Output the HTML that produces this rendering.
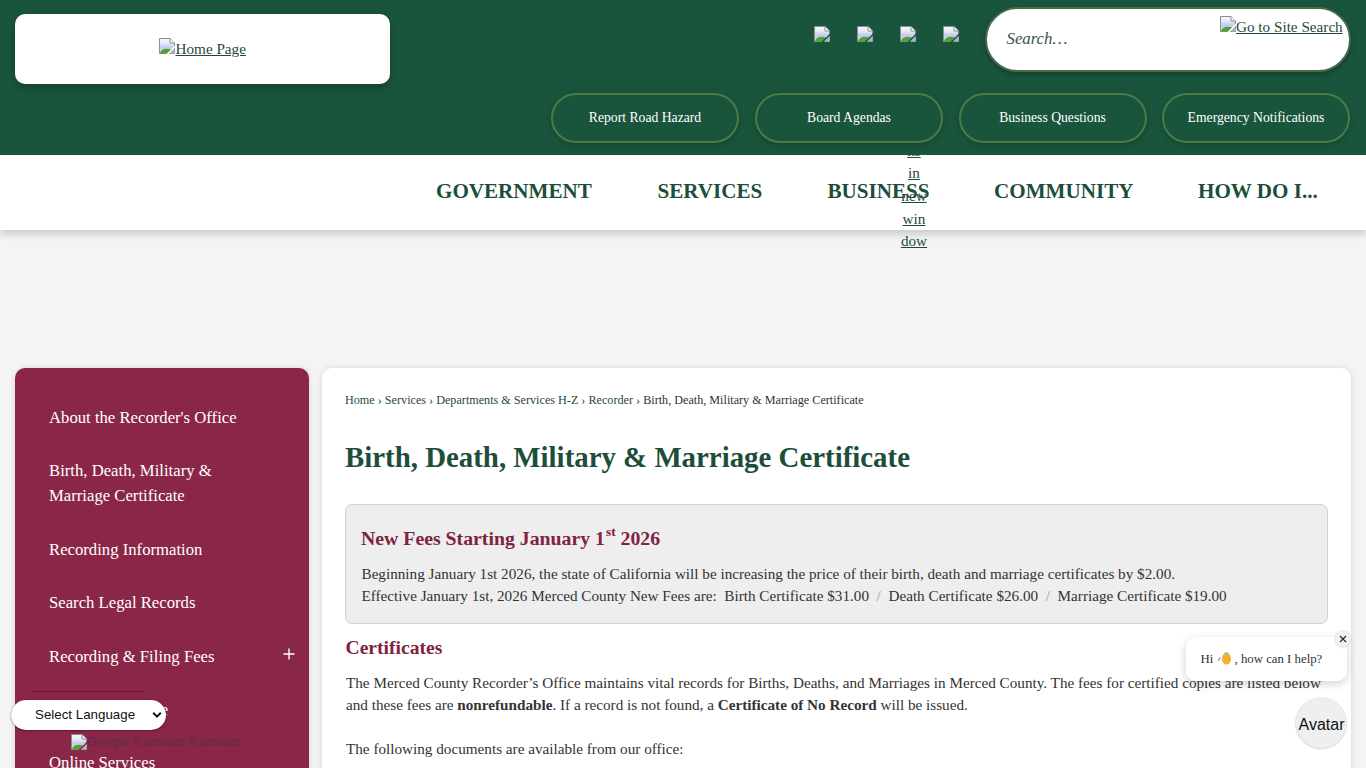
<!DOCTYPE html>
<html><head><meta charset="utf-8">
<style>
*{box-sizing:border-box;margin:0;padding:0}
html,body{width:1366px;height:768px;overflow:hidden}
body{background:#f4f4f4;font-family:"Liberation Serif",serif;position:relative;color:#333;font-size:15.2px;line-height:1.5}
.abs{position:absolute}
.t{position:absolute;white-space:nowrap}
#hdr{left:0;top:0;width:1366px;height:155px;background:#19553c;z-index:5}
#logo{left:15px;top:14px;width:375px;height:70px;background:#fff;border-radius:10px;box-shadow:0 3px 8px rgba(0,0,0,.28)}
.bi{position:absolute;width:16px;height:16px}
.lnk{color:#1f4a3b;text-decoration:underline;font-size:15.2px;line-height:20px;white-space:nowrap}
#search{left:985px;top:7px;width:366px;height:65px;background:#fff;border:2px solid #486c43;border-radius:33px;box-shadow:0 2px 6px rgba(0,0,0,.3)}
.btn{position:absolute;top:93px;width:188px;height:50px;border:2px solid #4a7c48;border-radius:25px;color:#fff;font-size:13.68px;text-align:center;line-height:46px;box-shadow:0 2px 6px rgba(0,0,0,.22)}
#nav{left:0;top:155px;width:1366px;height:75px;background:#fff;box-shadow:0 4px 8px rgba(0,0,0,.18);z-index:3}
.ni{position:absolute;top:-1px;height:75px;line-height:75px;font-weight:bold;font-size:21.1px;color:#1c4e3a;white-space:nowrap}
#owin{left:884px;top:116.5px;width:60px;font-size:15.2px;line-height:22.8px;text-align:center;z-index:4;color:#1f4a3b}
#owin span{text-decoration:underline}
#side{left:15px;top:368px;width:294px;height:420px;background:#8a2648;border-radius:10px;box-shadow:0 0 6px rgba(0,0,0,.12)}
.si{position:absolute;left:49px;color:#fff;font-size:16.7px;line-height:25px;white-space:nowrap;z-index:2}
#card{left:322px;top:368px;width:1029px;height:420px;background:#fff;border-radius:10px;box-shadow:0 0 6px rgba(0,0,0,.12)}
.bc{color:#1f4a3b}
#notice{left:345px;top:504px;width:983px;height:120px;background:#eeeeee;border:1px solid #d2d2d2;border-radius:7px}
h1{position:absolute;font-size:28.87px;line-height:34px;font-weight:bold;color:#1c4e3a;white-space:nowrap}
.h3{position:absolute;font-size:19.8px;line-height:24px;font-weight:bold;color:#80233f;white-space:nowrap}
.sep{color:#999}
#sel{left:11px;top:700px;width:155px;height:30px;background:#fff;border-radius:15px;box-shadow:0 0 1px rgba(0,0,0,.5),0 1px 2px rgba(0,0,0,.3);z-index:6;font-family:"Liberation Sans",sans-serif;font-size:13.33px;color:#111}
#bubble{left:1186px;top:637px;width:161px;height:44px;background:#fff;border-radius:10px;box-shadow:0 3px 10px rgba(0,0,0,.18);z-index:6}
#avatar{left:1296px;top:698px;width:50px;height:50px;border-radius:25px;background:#efefef;box-shadow:0 0 0 1px rgba(0,0,0,.06),0 1px 3px rgba(0,0,0,.12);z-index:6;font-family:"Liberation Sans",sans-serif;font-size:16px;color:#111}
</style></head><body>

<!-- HEADER -->
<div id="hdr" class="abs">
  <div id="logo" class="abs">
    <svg class="bi" style="left:144px;top:24px" viewBox="0 0 16 16"><use href="#bimg"/></svg>
    <div class="t lnk" style="left:160.5px;top:25px">Home Page</div>
  </div>
  <svg class="bi" style="left:814px;top:26px" viewBox="0 0 16 16"><use href="#bimg"/></svg>
  <svg class="bi" style="left:857px;top:26px" viewBox="0 0 16 16"><use href="#bimg"/></svg>
  <svg class="bi" style="left:900px;top:26px" viewBox="0 0 16 16"><use href="#bimg"/></svg>
  <svg class="bi" style="left:943px;top:26px" viewBox="0 0 16 16"><use href="#bimg"/></svg>
  <div id="search" class="abs">
    <div class="t" style="left:19.5px;top:19.8px;font-style:italic;font-size:16.75px;line-height:20px;color:#355449">Search…</div>
    <svg class="bi" style="left:233px;top:7px" viewBox="0 0 16 16"><use href="#bimg"/></svg>
    <div class="t lnk" style="left:249px;top:8px">Go to Site Search</div>
  </div>
  <div class="btn" style="left:551px">Report Road Hazard</div>
  <div class="btn" style="left:755px">Board Agendas</div>
  <div class="btn" style="left:958.5px">Business Questions</div>
  <div class="btn" style="left:1162px">Emergency Notifications</div>
</div>

<!-- NAV -->
<div id="nav" class="abs">
  <div class="ni" style="left:436px">GOVERNMENT</div>
  <div class="ni" style="left:657.5px">SERVICES</div>
  <div class="ni" style="left:827.5px">BUSINESS</div>
  <div class="ni" style="left:994px">COMMUNITY</div>
  <div class="ni" style="left:1198px">HOW DO I...</div>
</div>
<div id="owin" class="abs"><span>Ope</span><br><span style="position:relative;top:1px">ns</span><br><span>in</span><br><span>new</span><br><span>win</span><br><span>dow</span></div>

<!-- SIDEBAR -->
<div id="side" class="abs"></div>
<div class="si" style="top:405px">About the Recorder's Office</div>
<div class="si" style="top:457.5px">Birth, Death, Military &amp;<br>Marriage Certificate</div>
<div class="si" style="top:536.5px">Recording Information</div>
<div class="si" style="top:589.5px">Search Legal Records</div>
<div class="si" style="top:644px">Recording &amp; Filing Fees</div>
<svg class="abs" style="left:283px;top:648px;z-index:2" width="12" height="12" viewBox="0 0 12 12"><path d="M6 0.5V11.5M0.5 6H11.5" stroke="#fff" stroke-width="1.4"/></svg>
<div class="abs" style="left:32px;top:691px;width:112px;height:1px;background:rgba(60,10,30,.45);z-index:2"></div>
<div class="si" style="top:697.4px;left:51px">Marriage License</div>
<div class="si" style="top:750px">Online Services</div>
<svg class="bi" style="left:71px;top:734px;z-index:2" viewBox="0 0 16 16"><use href="#bimg"/></svg>
<div class="t" style="left:87px;top:734px;z-index:2;font-family:'Liberation Sans',sans-serif;font-weight:bold;font-size:12px;line-height:16px;color:#682b46">Google Translate Translate</div>
<div id="sel" class="abs">
  <div class="t" style="left:24px;top:7px;line-height:16px">Select Language</div>
  <svg class="abs" style="left:141px;top:11px" width="10" height="8" viewBox="0 0 10 8"><path d="M1.2 1.8L5 5.6L8.8 1.8" stroke="#111" stroke-width="2" fill="none"/></svg>
</div>

<!-- CARD -->
<div id="card" class="abs"></div>
<div class="t" style="left:345px;top:391px;font-size:12.16px;line-height:18px;z-index:2"><span class="bc">Home</span> › <span class="bc">Services</span> › <span class="bc">Departments &amp; Services H-Z</span> › <span class="bc">Recorder</span> › Birth, Death, Military &amp; Marriage Certificate</div>
<h1 style="left:345px;top:440px;z-index:2">Birth, Death, Military &amp; Marriage Certificate</h1>
<div id="notice" class="abs"></div>
<div class="h3" style="left:361px;top:525.5px;z-index:2">New Fees Starting January 1<sup style="font-size:13.4px;line-height:0;vertical-align:9px;margin-left:1px">st</sup> 2026</div>
<div class="t" style="left:361.5px;top:562.5px;z-index:2">Beginning January 1st 2026, the state of California will be increasing the price of their birth, death and marriage certificates by $2.00.<br>Effective January 1st, 2026 Merced County New Fees are:&nbsp; Birth Certificate $31.00&nbsp; <span class="sep">/</span> &nbsp;Death Certificate $26.00&nbsp; <span class="sep">/</span> &nbsp;Marriage Certificate $19.00</div>
<div class="h3" style="left:345.5px;top:636px;z-index:2;font-size:19.6px">Certificates</div>
<div class="t" style="left:346px;top:671.5px;z-index:2">The Merced County Recorder’s Office maintains vital records for Births, Deaths, and Marriages in Merced County. The fees for certified copies are listed below<br>and these fees are <b>nonrefundable</b>. If a record is not found, a <b>Certificate of No Record</b> will be issued.</div>
<div class="t" style="left:346px;top:738px;z-index:2">The following documents are available from our office:</div>

<!-- CHAT -->
<div id="bubble" class="abs">
  <div class="t" style="left:14.5px;top:13.6px;font-size:12.8px;line-height:16px;color:#333">Hi <svg width="18" height="14" viewBox="0 0 18 14" style="vertical-align:-2px"><path d="M1 9.5 L3.5 6.5" stroke="#999" stroke-width="1.2"/><ellipse cx="9.5" cy="7.8" rx="4.6" ry="5.8" fill="#f2b12a"/><ellipse cx="9.5" cy="2.4" rx="2.2" ry="1.5" fill="#b4bb9c"/></svg>, how can I help?</div>
  <div class="abs" style="left:149px;top:-6px;width:16px;height:16px;border-radius:8px;background:#f1f1f1;box-shadow:0 0 2px rgba(0,0,0,.25)"></div>
  <svg class="abs" style="left:152px;top:-3px" width="10" height="10" viewBox="0 0 10 10"><path d="M2 2L8 8M8 2L2 8" stroke="#222" stroke-width="1.1"/></svg>
</div>
<div id="avatar" class="abs"><div class="t" style="left:2.5px;top:18px;line-height:18px">Avatar</div></div>

<svg width="0" height="0" style="position:absolute">
  <defs>
    <mask id="tear" maskUnits="userSpaceOnUse" x="0" y="0" width="16" height="16"><rect x="0" y="0" width="16" height="16" fill="#fff"/><path d="M8 16.5L16.5 8" stroke="#000" stroke-width="1.5"/></mask>
    <linearGradient id="sky" x1="0" y1="0" x2="0" y2="1"><stop offset="0" stop-color="#f2f7ff"/><stop offset="0.3" stop-color="#e6ecfa"/><stop offset="0.6" stop-color="#c3c9f0"/><stop offset="1" stop-color="#dce8f0"/></linearGradient>
    <g id="bimg"><g mask="url(#tear)">
      <path d="M0.5 0.5H11L15.5 5V15.5H0.5Z" fill="url(#sky)" stroke="#8e8e8e" stroke-width="1"/>
      <path d="M11 0.5V5H15.5" fill="#f4f6fb" stroke="#8e8e8e" stroke-width="1"/>
      <path d="M1 15.5C1.5 12 6 9.5 12.5 11.5L8.5 15.5Z" fill="#4fa431"/>
      <path d="M10 15.5L15.5 10V15.5Z" fill="#a9b6c8"/>
    </g></g>
  </defs>
</svg>
</body></html>
